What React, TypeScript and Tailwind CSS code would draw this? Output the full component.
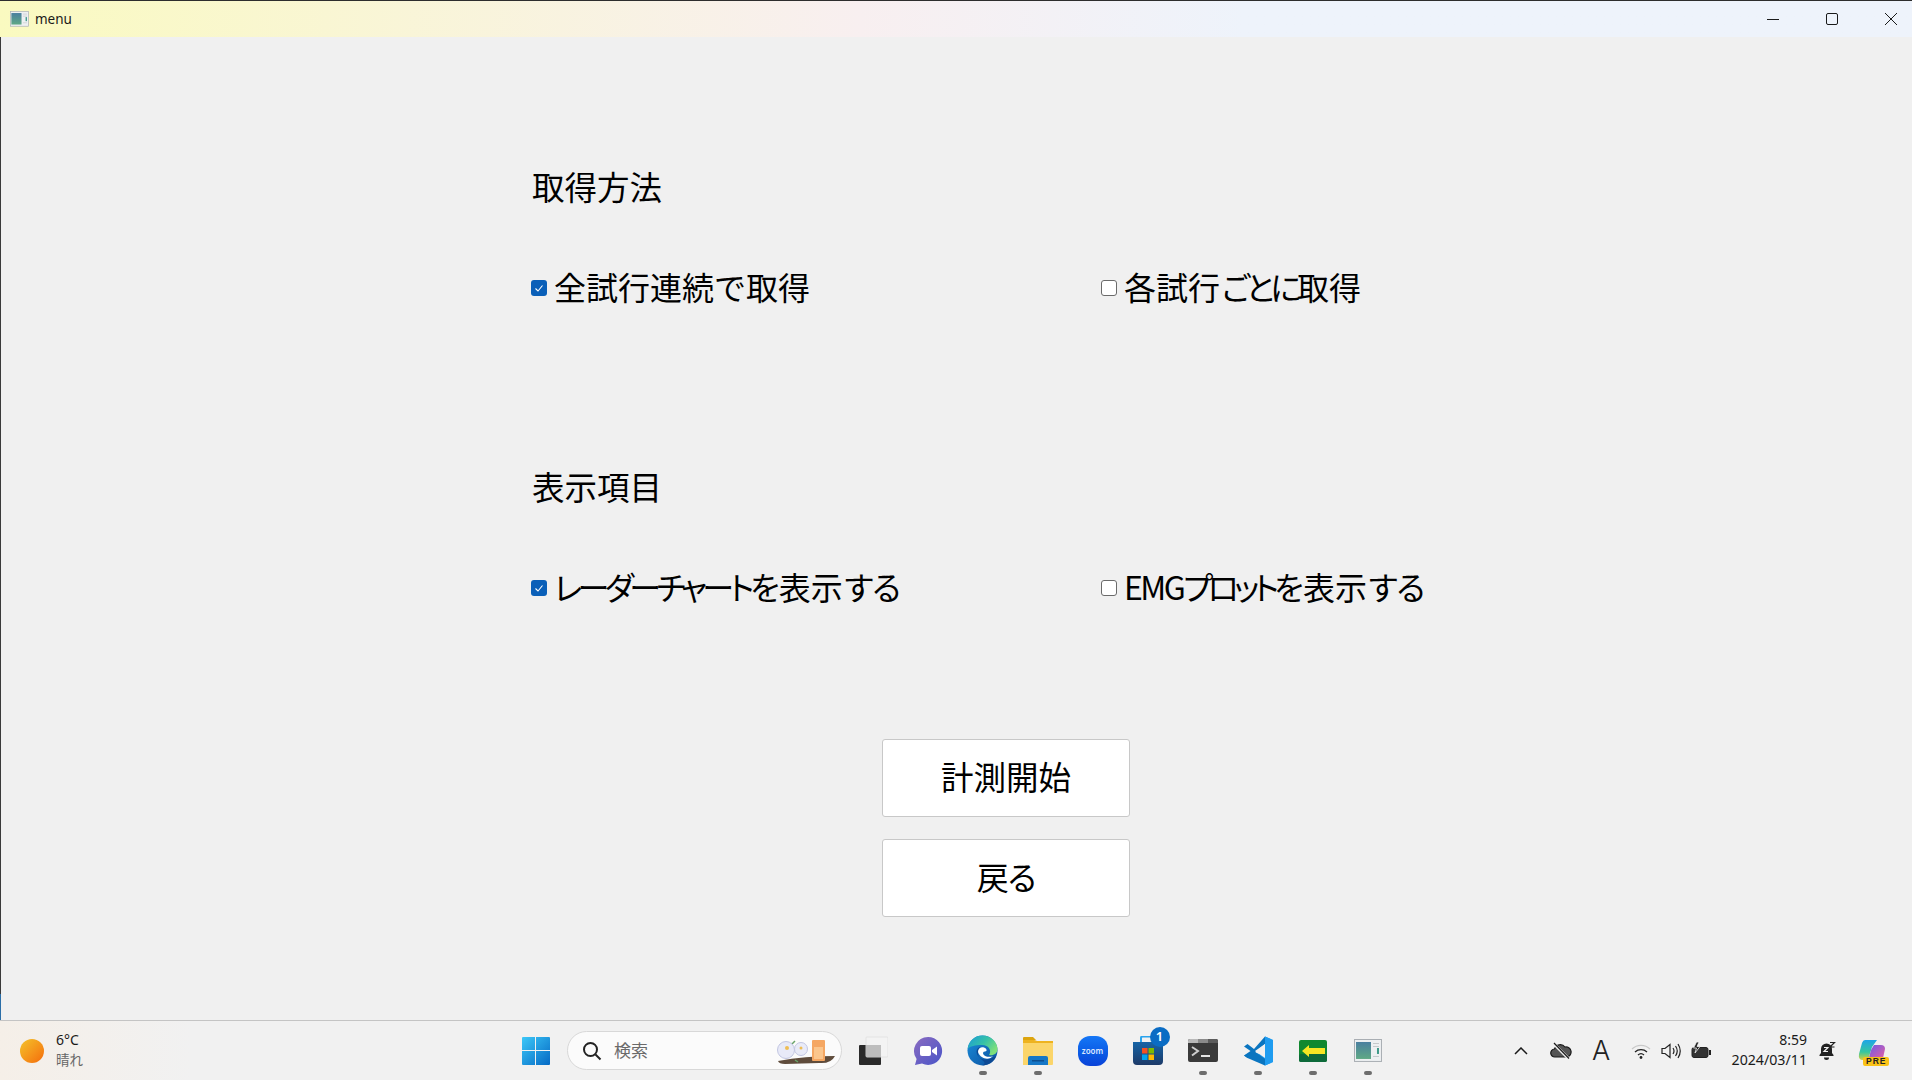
const jp = "font-['Noto_Sans_CJK_JP','Noto_Sans',sans-serif]";

const CheckBox = ({ checked }: { checked: boolean }) =>
  checked ? (
    <span className="flex h-4 w-4 items-center justify-center rounded-[3px] bg-[#0a5fb8]">
      <svg width="10" height="10" viewBox="0 0 10 10" fill="none" stroke="white" strokeWidth="1.1">
        <path d="M1.5 5.5 L4 8 L8.5 2.5" />
      </svg>
    </span>
  ) : (
    <span className="h-4 w-4 rounded-[3px] border border-[#6a6a6a] bg-white" />
  );

const Option = ({ children, checked, width }: { children: React.ReactNode; checked: boolean; width: string }) => (
  <div className={`flex h-10 items-center gap-[7px] ${width}`}>
    <CheckBox checked={checked} />
    <span className="pb-1 text-[32px] leading-10 text-black">{children}</span>
  </div>
);

const AppGlyph = ({ size, id }: { size: number; id: string }) => (
  <svg width={size} height={size * 0.82} viewBox="0 0 28 23">
    <rect x="0.5" y="0.5" width="27" height="22" fill="#eef0f2" stroke="#a9aeb3" />
    <rect x="2" y="3" width="15" height="17" fill={`url(#${id})`} />
    <rect x="19" y="4" width="6" height="1" fill="#c5c9cc" />
    <rect x="19" y="7" width="6" height="1" fill="#c5c9cc" />
    <rect x="23" y="9" width="2" height="6" fill="#3f9a8a" />
    <rect x="19" y="17" width="6" height="1" fill="#c5c9cc" />
    <defs>
      <linearGradient id={id} x1="0" y1="0" x2="0" y2="1">
        <stop offset="0" stopColor="#4a7f9f" />
        <stop offset="1" stopColor="#5fa985" />
      </linearGradient>
    </defs>
  </svg>
);

const TitleBar = () => (
  <div className="flex h-[37px] shrink-0 items-center border-t border-[#2d2d2d] bg-gradient-to-r from-[#fafac0] via-[#f8eff0] via-45% to-[#eef3fb] to-65%">
    <div className="ml-[10px] flex w-[25px]">
      <AppGlyph size={19} id="appTitle" />
    </div>
    <span className="font-['Noto_Sans',sans-serif] text-[13.5px] text-[#1a1a1a]">menu</span>
    <div className="ml-auto flex items-center pr-[15px]">
      <svg width="12" height="12" viewBox="0 0 12 12" stroke="#1a1a1a" fill="none" className="mr-[47px]">
        <path d="M0 6.5 H12" />
      </svg>
      <svg width="12" height="12" viewBox="0 0 12 12" stroke="#1a1a1a" fill="none" className="mr-[47px]">
        <rect x="0.5" y="0.5" width="11" height="11" rx="1.5" />
      </svg>
      <svg width="12" height="12" viewBox="0 0 12 12" stroke="#1a1a1a" fill="none">
        <path d="M0 0 L12 12 M12 0 L0 12" />
      </svg>
    </div>
  </div>
);

const Main = () => (
  <div className="flex flex-1">
    <div className="flex w-px flex-col">
      <div className="flex-1 bg-[#3a3a3a]" />
      <div className="h-[26px] bg-[#2a6ea8]" />
    </div>
    <main className={`flex-1 pl-[530px] pt-[131px] ${jp}`}>
      <h2 className="ml-px h-10 text-[32.5px] font-normal leading-9 text-black">取得方法</h2>
      <div className="mt-[60px] flex">
        <Option checked width="w-[570px]">全試行連続で取得</Option>
        <Option checked={false} width="w-[400px]">
          各試行<span className="tracking-[-7px]">ごと</span><span className="tracking-[-5px]">に</span>取得
        </Option>
      </div>
      <h2 className="ml-px mt-[160px] h-10 text-[32.5px] font-normal leading-9 text-black">表示項目</h2>
      <div className="mt-[60px] flex">
        <Option checked width="w-[570px]">
          <span className="tracking-[-4.5px] [font-feature-settings:'palt']">レーダーチャート</span>
          <span className="tracking-[-3px]">を</span>表示<span className="tracking-[-4px]">する</span>
        </Option>
        <Option checked={false} width="w-[400px]">
          <span className="tracking-[-2.5px]">EMG</span>
          <span className="tracking-[-5px] [font-feature-settings:'palt']">プロット</span>
          <span className="tracking-[-3px]">を</span>表示<span className="tracking-[-4px]">する</span>
        </Option>
      </div>
      <div className="ml-[351px] mt-[131px] flex w-[248px] flex-col gap-[22px]">
        <button className="h-[78px] rounded-[3px] border border-[#c8c8c8] bg-white pb-1 text-[32.5px] text-black">計測開始</button>
        <button className="h-[78px] rounded-[3px] border border-[#c8c8c8] bg-white pb-1 text-[32px] tracking-[-1px] text-black [font-feature-settings:'palt']">戻る</button>
      </div>
    </main>
  </div>
);

const Cell = ({ children, running }: { children: React.ReactNode; running?: boolean }) => (
  <div className="relative flex h-[59px] w-[55px] items-center justify-center">
    {children}
    {running && <span className="absolute bottom-[5px] h-1 w-2 rounded-full bg-[#6d6d6d]" />}
  </div>
);

const StartIcon = () => (
  <svg width="30" height="30" viewBox="0 0 30 30">
    <defs>
      <linearGradient id="win" x1="0" y1="0" x2="1" y2="1">
        <stop offset="0" stopColor="#3cc8f8" />
        <stop offset="1" stopColor="#0569c4" />
      </linearGradient>
    </defs>
    <path d="M1 2 a1 1 0 0 1 1-1 H14 V14 H1 Z M15 1 H28 a1 1 0 0 1 1 1 V14 H15 Z M1 15 H14 V29 H2 a1 1 0 0 1-1-1 Z M15 15 H29 V28 a1 1 0 0 1-1 1 H15 Z" fill="url(#win)" />
  </svg>
);

const SearchArt = () => (
  <svg width="62" height="30" viewBox="0 0 62 30">
    <path d="M3 25 Q30 20 60 20 Q56 28 44 27 L10 28 Q4 28 3 25 Z" fill="#5f4c3c" />
    <path d="M16 7 L17 12 M17 8 L20 5 M20 24 L23 26" stroke="#6aa56a" strokeWidth="1.5" />
    <circle cx="11" cy="14" r="8.5" fill="#e8eaf8" stroke="#c2c6e2" />
    <circle cx="12" cy="12" r="2" fill="#eebd55" />
    <circle cx="26" cy="13" r="6.5" fill="#e9ebf8" stroke="#c2c6e2" />
    <circle cx="26" cy="12" r="1.5" fill="#eebd55" />
    <rect x="37" y="4" width="13" height="21" rx="1" fill="#f5a763" />
    <rect x="39" y="11" width="9" height="12" fill="#fbc68d" />
  </svg>
);

const TaskViewIcon = () => (
  <svg width="30" height="30" viewBox="0 0 30 30">
    <rect x="1" y="9" width="22" height="20" rx="1" fill="#2a2a2a" />
    <rect x="8" y="1" width="22" height="20" rx="1" fill="#f4f4f4" opacity="0.85" stroke="#e0e0e0" />
    <rect x="8" y="9" width="15" height="12" fill="#bdbdbd" />
  </svg>
);

const ChatIcon = () => (
  <svg width="30" height="30" viewBox="0 0 30 30">
    <defs>
      <linearGradient id="chat" x1="0" y1="0" x2="1" y2="1">
        <stop offset="0" stopColor="#8a6bc0" />
        <stop offset="1" stopColor="#4a55c8" />
      </linearGradient>
    </defs>
    <path d="M15 1 a14 14 0 1 1-6 26.6 L2 29 L3.6 23 A14 14 0 0 1 15 1 Z" fill="url(#chat)" />
    <rect x="7" y="10" width="11" height="10" rx="2" fill="white" />
    <path d="M19 14 L24 10.5 V19.5 L19 16 Z" fill="white" />
  </svg>
);

const EdgeIcon = () => (
  <svg width="31" height="31" viewBox="0 0 31 31">
    <defs>
      <linearGradient id="edgeA" x1="0" y1="0" x2="1" y2="0.6">
        <stop offset="0" stopColor="#1a9ad8" />
        <stop offset="0.55" stopColor="#35c1a8" />
        <stop offset="1" stopColor="#7ee07a" />
      </linearGradient>
      <linearGradient id="edgeB" x1="0" y1="0" x2="1" y2="1">
        <stop offset="0" stopColor="#1a8fdc" />
        <stop offset="1" stopColor="#0c4f9e" />
      </linearGradient>
    </defs>
    <circle cx="15.5" cy="15.5" r="15" fill="url(#edgeB)" />
    <path d="M0.7 14 C2 5 8 0.5 15.5 0.5 C24 0.5 30.5 7 30.5 14 C30.5 19 26 21 22 20 C25 16 22 10 15 10 C8 10 3 11 0.7 14 Z" fill="url(#edgeA)" />
    <path d="M14 12 C10 12 9 16 10 19 C11.5 23.5 17 25.5 23 24 L29 21 C27 27 21 30.5 15.5 30.5 C20 28 16 26 14 24 C11 22 9 16 14 12 Z" fill="#0d4a94" />
    <path d="M11 17 C11 13.5 14 11.5 17 12.5 C20 13.5 20.5 16.5 18 16.5 C16 16.5 15.5 18 16.5 19.5 C18 22 23 22.5 26 21 C23 25 14 25 11 17 Z" fill="white" />
  </svg>
);

const FolderIcon = () => (
  <svg width="31" height="30" viewBox="0 0 31 30">
    <path d="M1 2 a1 1 0 0 1 1-1 H11 L14 4 H1 Z" fill="#dca40e" />
    <path d="M1 4 H12 L15 5 H30 a1 1 0 0 1 1 1 V28 a1 1 0 0 1-1 1 H1 Z" fill="#fbd56a" />
    <path d="M12 4 L15 5 H31 V7 H1 V4 Z" fill="#eeb320" />
    <path d="M6 29 V22 a2 2 0 0 1 2-2 H24 a2 2 0 0 1 2 2 V29 Z" fill="#1677c6" />
    <rect x="10" y="24" width="12" height="1.5" fill="#0c4f90" />
  </svg>
);

const ZoomIcon = () => (
  <div className="flex h-[30px] w-[30px] items-center justify-center rounded-[12px] bg-gradient-to-b from-[#1677f6] to-[#0b42d8]">
    <span className="font-['Noto_Sans',sans-serif] text-[8px] font-semibold text-[#dbe7ff]">zoom</span>
  </div>
);

const StoreIcon = () => (
  <div className="relative">
    <svg width="30" height="30" viewBox="0 0 30 30">
      <defs>
        <linearGradient id="store" x1="0" y1="0" x2="0" y2="1">
          <stop offset="0" stopColor="#1664a6" />
          <stop offset="1" stopColor="#1d3a68" />
        </linearGradient>
      </defs>
      <path d="M8 6 V2 a1.5 1.5 0 0 1 1.5-1.5 H21 V6" fill="none" stroke="#2aa4ee" strokeWidth="2" />
      <path d="M0 6 H30 V25 a4 4 0 0 1-4 4 H4 a4 4 0 0 1-4-4 Z" fill="url(#store)" />
      <rect x="9" y="12" width="5.5" height="5.5" fill="#f25022" />
      <rect x="15.5" y="12" width="5.5" height="5.5" fill="#7fba00" />
      <rect x="9" y="18.5" width="5.5" height="5.5" fill="#00a4ef" />
      <rect x="15.5" y="18.5" width="5.5" height="5.5" fill="#ffb900" />
    </svg>
    <span className="absolute right-[-7px] top-[-9px] flex h-5 w-5 items-center justify-center rounded-full bg-[#0a6cc4] font-['Noto_Sans',sans-serif] text-[13px] font-semibold leading-none text-white">
      1
    </span>
  </div>
);

const TerminalIcon = () => (
  <svg width="30" height="23" viewBox="0 0 30 23">
    <path d="M0 2 a2 2 0 0 1 2-2 H28 a2 2 0 0 1 2 2 V21 a2 2 0 0 1-2 2 H2 a2 2 0 0 1-2-2 Z" fill="#3a3a3a" />
    <path d="M0 2 a2 2 0 0 1 2-2 H10 V4 H0 Z" fill="#b9b9b9" />
    <rect x="10" y="0" width="10" height="4" fill="#8a8a8a" />
    <path d="M20 0 H28 a2 2 0 0 1 2 2 V4 H20 Z" fill="#5c5c5c" />
    <path d="M4 8 L10 12 L4 16.5" fill="none" stroke="#cfcfcf" strokeWidth="2" />
    <rect x="13" y="16" width="9" height="2" fill="#e4e4e4" />
  </svg>
);

const VsCodeIcon = () => (
  <svg width="30" height="30" viewBox="0 0 30 30">
    <path d="M22 0.5 L30 4 V26 L22 29.5 L8 16 L22 19 Z" fill="#1f9cf0" />
    <path d="M22 0.5 V8 L11 17 L4.5 22 L1 19.5 L7.5 15 L1 10.5 L4.5 8 L11 13 Z" fill="#0a75c0" />
    <path d="M11 15 L22 23 V29.5 L4.5 22 L1 19.5 Z" fill="#0a75c0" />
    <path d="M22 8 V22 L12 15 Z" fill="#f0f0f0" />
    <path d="M22 0.5 L30 4 V26 L22 29.5 Z" fill="#1f9cf0" />
  </svg>
);

const GreenIcon = () => (
  <svg width="28" height="22" viewBox="0 0 28 22">
    <rect width="28" height="22" rx="2" fill="#10882f" />
    <rect y="14" width="28" height="8" rx="2" fill="#0d6a3a" />
    <path d="M3 11 L10 5 V8 H26 V14 H10 V17 Z" fill="#f6e624" />
  </svg>
);

const WifiIcon = () => (
  <svg width="20" height="16" viewBox="0 0 20 16" fill="none">
    <path d="M1 6 A13 13 0 0 1 19 6" stroke="#c8c8c8" strokeWidth="1.2" />
    <path d="M4 9 A9 9 0 0 1 16 9" stroke="#222" strokeWidth="1.3" />
    <path d="M7 12 A4.5 4.5 0 0 1 13 12" stroke="#222" strokeWidth="1.3" />
    <circle cx="10" cy="14.5" r="1.4" fill="#222" />
  </svg>
);

const Taskbar = () => (
  <footer className="flex h-[60px] shrink-0 items-center border-t border-[#c4c4c4] bg-gradient-to-r from-[#f5efe8] via-[#f1f1f1] via-10% to-[#f1f1f1] font-['Noto_Sans','Noto_Sans_CJK_JP',sans-serif]">
    <div className="flex w-[508px] items-center pl-5">
      <span className="h-6 w-6 rounded-full bg-gradient-to-br from-[#f2c22a] to-[#f36a0a]" />
      <div className="ml-3 flex flex-col pb-0.5">
        <span className="text-[14px] leading-5 text-[#1a1a1a]">6°C</span>
        <span className="text-[13.5px] leading-5 text-[#666666]">晴れ</span>
      </div>
    </div>
    <Cell>
      <StartIcon />
    </Cell>
    <div className="ml-1 mr-[3px] flex h-[39px] w-[275px] items-center rounded-full border border-[#d8d8d8] bg-[#fbfbfb] pl-[14px] pr-[4px]">
      <svg width="20" height="20" viewBox="0 0 20 20" fill="none" stroke="#222" strokeWidth="2">
        <circle cx="8.5" cy="8.5" r="6.5" />
        <path d="M13.5 13.5 L18.5 18.5" />
      </svg>
      <span className={`ml-3 pb-0.5 text-[17px] text-[#6a6a6a] ${jp}`}>検索</span>
      <span className="ml-auto flex">
        <SearchArt />
      </span>
    </div>
    <Cell>
      <TaskViewIcon />
    </Cell>
    <Cell>
      <ChatIcon />
    </Cell>
    <Cell running>
      <EdgeIcon />
    </Cell>
    <Cell running>
      <FolderIcon />
    </Cell>
    <Cell>
      <ZoomIcon />
    </Cell>
    <Cell>
      <StoreIcon />
    </Cell>
    <Cell running>
      <TerminalIcon />
    </Cell>
    <Cell running>
      <VsCodeIcon />
    </Cell>
    <Cell running>
      <GreenIcon />
    </Cell>
    <Cell running>
      <AppGlyph size={28} id="appTask" />
    </Cell>

    <div className="ml-[106px] flex items-center">
      <div className="flex w-10 justify-center">
        <svg width="14" height="8" viewBox="0 0 14 8" fill="none" stroke="#1a1a1a" strokeWidth="1.5">
          <path d="M1 7 L7 1 L13 7" />
        </svg>
      </div>
      <div className="flex w-10 justify-center">
        <svg width="22" height="18" viewBox="0 0 22 18">
          <path d="M5 15 a4 4 0 0 1-.5-8 A6 6 0 0 1 15 5 a4.5 4.5 0 0 1 2 10 Z" fill="#555" stroke="#1a1a1a" strokeWidth="1.2" />
          <path d="M3 1 L19 17" stroke="#f0f0f0" strokeWidth="3" />
          <path d="M4 1 L19 16.5" stroke="#1a1a1a" strokeWidth="1.2" />
        </svg>
      </div>
      <div className="flex w-10 justify-center">
        <span className="font-['Inter',sans-serif] text-[27px] font-light leading-none text-[#222222]">A</span>
      </div>
      <div className="ml-[5px] flex w-[30px] justify-center">
        <WifiIcon />
      </div>
      <div className="flex w-[30px] justify-center">
        <svg width="20" height="18" viewBox="0 0 20 18" fill="none" stroke="#222" strokeWidth="1.2">
          <path d="M1 6.5 H4 L9 2.5 V15.5 L4 11.5 H1 Z" />
          <path d="M12 6 Q14 9 12 12 M14.5 4 Q18 9 14.5 14 M17 2 Q21.5 9 17 16" />
        </svg>
      </div>
      <div className="flex w-[30px] justify-center">
        <svg width="21" height="17" viewBox="0 0 21 17">
          <rect x="1" y="5.5" width="16" height="10" rx="2" fill="#333" stroke="#222" />
          <rect x="18" y="8" width="2" height="5" fill="#222" />
          <path d="M5.5 0 L2.5 6 H5.5 L4 11 L9 4.5 H6 L8 0 Z" fill="#222" stroke="#f0f0f0" strokeWidth="0.8" />
        </svg>
      </div>
      <div className="ml-[-5px] flex w-[96px] flex-col items-end pb-0.5 text-[#1a1a1a]">
        <span className="text-[14px] leading-5">8:59</span>
        <span className="text-[14.2px] leading-5">2024/03/11</span>
      </div>
      <div className="flex w-10 justify-center">
        <svg width="18" height="20" viewBox="0 0 18 20">
          <path d="M1.5 14 L3 12 V8 a5.5 5.5 0 0 1 11 0 V12 L15.5 14 V15 H1.5 Z" fill="#222" />
          <path d="M6 16.5 H11 a2.5 2.5 0 0 1-5 0 Z" fill="#222" />
          <path d="M6 6.5 H10 L6 10.5 H10" fill="none" stroke="#f0f0f0" strokeWidth="1.2" />
          <path d="M12 1.5 H16.5 L12 6 H16.5" fill="none" stroke="#222" strokeWidth="1.2" />
        </svg>
      </div>
      <div className="relative flex w-[50px] justify-center">
        <svg width="28" height="24" viewBox="0 0 28 24">
          <defs>
            <linearGradient id="copL" x1="0" y1="0" x2="0" y2="1">
              <stop offset="0" stopColor="#1ea5e8" />
              <stop offset="0.6" stopColor="#35c6a0" />
              <stop offset="1" stopColor="#d8cf3a" />
            </linearGradient>
            <linearGradient id="copR" x1="0" y1="0" x2="1" y2="1">
              <stop offset="0" stopColor="#6a5be8" />
              <stop offset="1" stopColor="#ef5fa0" />
            </linearGradient>
          </defs>
          <path d="M7 1 H19 L14 8 L10 21 H5 Q0 21 1 15 L4 4 Q5 1 7 1 Z" fill="url(#copL)" />
          <path d="M13 11 L16 6 H23 Q27 6 27 10 L25 19 Q24 22 21 22 H10 Z" fill="url(#copR)" />
        </svg>
        <span className="absolute bottom-[-3px] left-[16px] rounded-[2px] bg-[#fbc318] px-[3px] font-['Liberation_Sans',sans-serif] text-[8.5px] font-bold leading-[9px] tracking-[1px] text-[#222222]">
          PRE
        </span>
      </div>
    </div>
  </footer>
);

const App = () => (
  <div className="flex h-[1080px] w-[1912px] flex-col overflow-hidden bg-[#f0f0f0]">
    <TitleBar />
    <Main />
    <Taskbar />
  </div>
);

export default App;
